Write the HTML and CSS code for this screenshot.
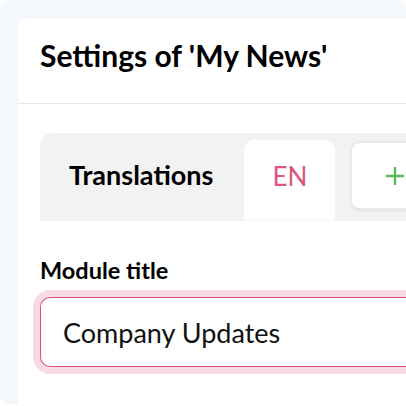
FILE: index.html
```html
<!DOCTYPE html>
<html lang="en">
<head>
  <meta charset="UTF-8">
  <meta name="viewport" content="width=device-width, initial-scale=1.0">
  <title>Settings of 'My News'</title>

  <link rel="stylesheet" href="styles.css">
</head>
<body>

  <div class="frame">
    <div class="card">
      <div class="card-header">
        <h1>Settings of 'My News'</h1>
      </div>

      <div class="card-body">
        <div class="tabs">
          <span class="tabs-title">Translations</span>
          <button class="tab active">EN</button>
          <button class="tab add" aria-label="Add translation">
            <svg width="20" height="20" viewBox="0 0 20 20">
              <path d="M10 1v18M1 10h18" stroke="#5cb85c" stroke-width="2.4" fill="none"/>
            </svg>
          </button>
        </div>

        <div class="field">
          <label for="module-title">Module title</label>
          <input id="module-title" type="text" value="Company Updates">
        </div>
      </div>
    </div>
  </div>

</body>
</html>
```

FILE: styles.css
```css
body {
  margin: 0;
  width: 406px;
  height: 406px;
  overflow: hidden;
  background-color: white;
  font-family: Lato, "Noto Sans", sans-serif;
  color: #111;
}

.frame {
  width: 406px;
  height: 404px;
  box-sizing: border-box;
  padding: 19px 0 0 18px;
  background-color: #f4f7fc;
  border-radius: 10px;
}

/* the card runs on past the right and bottom edge of the shot */
.card {
  height: 387px;
  overflow: hidden;
  background: white;
  border-radius: 6px 0 0 0;
}

.card-header {
  padding: 18px 22px 30px;
  border-bottom: 1px solid #e6e6e6;
}

.card-header h1 {
  margin: 0;
  font-size: 30px;
  font-weight: 700;
  line-height: 36px;
  color: #000;
}

.card-body {
  padding: 29px 0 0 22px;
}

.tabs {
  display: flex;
  align-items: flex-start;
  height: 88px;
  box-sizing: border-box;
  padding: 7px 0 0 29px;
  background-color: #f2f2f2;
  border-radius: 12px 0 0 0;
}

.tabs-title {
  margin-top: 19px;
  font-size: 27px;
  font-weight: 700;
  line-height: 32px;
  color: #000;
}

.tab {
  border: none;
  background: white;
  font-family: inherit;
  cursor: pointer;
}

.tab.active {
  width: 91px;
  height: 81px;
  margin-left: 31px;
  padding: 0 0 9px;
  border-radius: 10px 10px 0 0;
  border-bottom: 1px solid #f4f4f4;
  font-size: 26px;
  color: #d9557f;
}

.tab.add {
  flex: 1;
  display: flex;
  align-items: center;
  height: 71px;
  margin: 1px 0 0 15px;
  padding: 0 0 0 33px;
  border: 2px solid #e8e8e8;
  border-right: none;
  border-bottom-width: 4px;
  border-radius: 10px 0 0 10px;
}

.field {
  padding-top: 35px;
}

.field label {
  display: block;
  font-size: 23.5px;
  font-weight: 700;
  line-height: 28px;
  color: #000;
}

.field input {
  display: block;
  width: 100%;
  height: 70px;
  box-sizing: border-box;
  margin-top: 13px;
  padding: 0 22px;
  border: 1.5px solid #d6517e;
  border-right: none;
  border-radius: 10px 0 0 10px;
  box-shadow: 0 0 0 7px #f6dbe4;
  outline: none;
  font-family: inherit;
  font-size: 27px;
  color: #111;
}
```
